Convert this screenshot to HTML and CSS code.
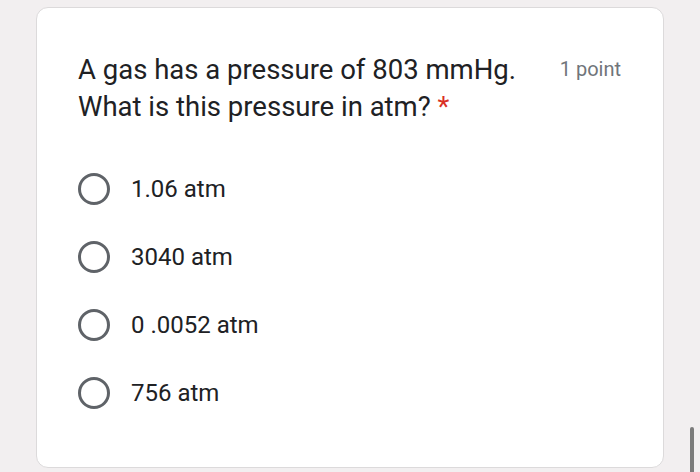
FILE: index.html
```html
<!DOCTYPE html>
<html>
<head>
<meta charset="utf-8">
<link rel="stylesheet" href="styles.css">
</head>
<body>
<div class="card">
  <div class="header">
    <div class="title">A gas has a pressure of 803 mmHg.<br>What is this pressure in atm? <span class="req">*</span></div>
    <div class="points">1 point</div>
  </div>
  <div class="options">
    <div class="option"><span class="radio"></span><span class="label">1.06 atm</span></div>
    <div class="option"><span class="radio"></span><span class="label">3040 atm</span></div>
    <div class="option"><span class="radio"></span><span class="label">0 .0052 atm</span></div>
    <div class="option"><span class="radio"></span><span class="label">756 atm</span></div>
  </div>
</div>
<div class="scrollbar"></div>
</body>
</html>
```
FILE: styles.css
```css
html, body {
  margin: 0;
  padding: 0;
}
body {
  width: 700px;
  height: 472px;
  background: #f2eff0;
  overflow: hidden;
  position: relative;
  font-family: Roboto, "Liberation Sans", sans-serif;
  color: #202124;
}
.card {
  position: relative;
  margin: 7px 0 0 36px;
  width: 628px;
  height: 461px;
  box-sizing: border-box;
  background: #fff;
  border: 1px solid #dcdadb;
  border-radius: 12px;
  padding: 43px 42px 0 41px;
}
.header {
  display: flex;
  justify-content: space-between;
  align-items: flex-start;
}
.title {
  font-size: 27.5px;
  line-height: 37px;
}
.req {
  color: #d93025;
}
.points {
  font-size: 20px;
  line-height: 36px;
  color: #70757a;
  margin-top: 0;
}
.options {
  margin-top: 30px;
  display: flex;
  flex-direction: column;
}
.option {
  height: 68px;
  display: flex;
  align-items: center;
}
.radio {
  width: 32px;
  height: 32px;
  box-sizing: border-box;
  border: 3.5px solid #5f6368;
  border-radius: 50%;
  flex: none;
}
.label {
  margin-left: 21px;
  font-size: 24px;
  color: #202124;
}
.scrollbar {
  position: absolute;
  left: 690px;
  top: 427px;
  width: 4px;
  height: 50px;
  border-radius: 2px;
  background: #7b7b7b;
}
```
